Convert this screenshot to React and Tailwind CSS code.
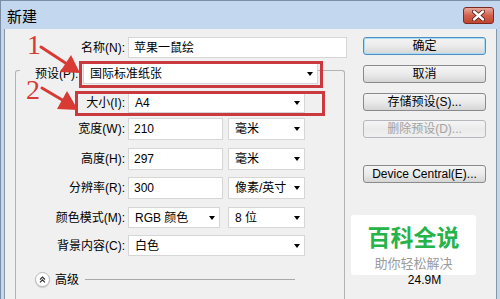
import React from "react";

const Field = ({ value, className = "" }) => (
  <div className={`flex items-center h-full bg-white border border-[#d6d6d6] pl-[5px] ${className}`}>
    <span className="whitespace-nowrap">{value}</span>
  </div>
);

const Select = ({ value, className = "" }) => (
  <div className={`flex items-center h-full bg-white border border-[#d6d6d6] pl-[6px] ${className}`}>
    <span className="whitespace-nowrap">{value}</span>
    <span className="ml-auto mr-[4px] w-0 h-0 border-l-[3.5px] border-r-[3.5px] border-t-[4px] border-l-transparent border-r-transparent border-t-black" />
  </div>
);

const Row = ({ label, className = "", children }) => (
  <div className={`flex items-center ${className}`}>
    <div className="w-[109px] text-right whitespace-nowrap">{label}</div>
    <div className="ml-[3px] flex h-full">{children}</div>
  </div>
);

const Button = ({ children, className = "", variant }) => {
  const look =
    variant === "default"
      ? "border-[#4f8fc0] shadow-[inset_0_0_0_1px_#a8dcf6] text-black"
      : variant === "disabled"
        ? "border-[#b4b8bc] text-[#a3a3a3] from-[#f5f5f5] to-[#f0f0f0]"
        : "border-[#8a8a8a] text-black";
  return (
    <div
      className={`h-[18px] flex items-center justify-center rounded-[3px] border bg-linear-to-b from-[#f4f4f4] via-[#ebebeb] to-[#d5d5d5] ${look} ${className}`}
    >
      {children}
    </div>
  );
};

export default function App() {
  return (
    <div className="relative w-[500px] h-[299px] overflow-hidden flex flex-col bg-[#c3d7ee] border-t border-l border-[#7b8ea6] text-[12px] leading-none text-black font-['Liberation_Sans','Noto_Sans_CJK_SC',sans-serif]">
      {/* title bar */}
      <div className="h-[28px] shrink-0 flex items-center justify-between pl-[6px] pr-[6px]">
        <span className="text-[15px] font-['Noto_Sans_CJK_SC',sans-serif]">新建</span>
        <div className="mt-[1px] w-[31px] h-[17px] rounded-[3px] border border-[#7a2a1f] bg-linear-to-b from-[#e9a79c] via-[#d2604c] to-[#c24430] flex items-center justify-center">
          <svg width="13" height="11" viewBox="0 0 13 11">
            <path d="M2 1.5 L11 9.5 M11 1.5 L2 9.5" stroke="#4a1a12" strokeWidth="4" strokeLinecap="round" />
            <path d="M2 1.5 L11 9.5 M11 1.5 L2 9.5" stroke="#ffffff" strokeWidth="2.4" strokeLinecap="round" />
          </svg>
        </div>
      </div>

      {/* dialog body */}
      <div className="flex-1 flex ml-[3px] mr-[3px] bg-[#f0f0f0] border-l border-r border-[#8797aa]">
        {/* left column */}
        <div className="w-[342px] shrink-0 flex flex-col">
          <div className="mt-[8px] h-[21px] flex items-center">
            <div className="w-[120px] text-right whitespace-nowrap">名称(N):</div>
            <Field value="苹果一鼠绘" className="ml-[3px] w-[219px]" />
          </div>

          {/* group box */}
          <div className="mt-[12px] ml-[10px] w-[330px] flex-1 flex flex-col border-t border-l border-r border-[#b3b3b3] rounded-t-[3px]">
            <div className="-mt-[8px] ml-[4px] pl-[15px] h-[21px] w-fit flex items-center bg-[#f0f0f0]">
              <div className="w-[45px] whitespace-nowrap">预设(P):</div>
              <Select value="国际标准纸张" className="ml-[3px] w-[235px]" />
            </div>

            <Row label="大小(I):" className="mt-[9px] h-[20px]">
              <Select value="A4" className="w-[177px]" />
            </Row>
            <Row label="宽度(W):" className="mt-[5px] h-[22px]">
              <Field value="210" className="w-[95px]" />
              <Select value="毫米" className="ml-[5px] w-[77px]" />
            </Row>
            <Row label="高度(H):" className="mt-[8px] h-[22px]">
              <Field value="297" className="w-[95px]" />
              <Select value="毫米" className="ml-[5px] w-[77px]" />
            </Row>
            <Row label="分辨率(R):" className="mt-[7px] h-[22px]">
              <Field value="300" className="w-[95px]" />
              <Select value="像素/英寸" className="ml-[5px] w-[77px]" />
            </Row>
            <Row label="颜色模式(M):" className="mt-[8px] h-[21px]">
              <Select value="RGB 颜色" className="w-[92px]" />
              <Select value="8 位" className="ml-[8px] w-[77px]" />
            </Row>
            <Row label="背景内容(C):" className="mt-[7px] h-[21px]">
              <Select value="白色" className="w-[177px]" />
            </Row>

            <div className="mt-[16px] ml-[19px] h-[15px] flex items-center">
              <div className="w-[15px] h-[15px] rounded-full bg-white border border-[#b9b9b9] shadow-[0_1px_1px_rgba(0,0,0,0.15)] flex items-center justify-center">
                <svg width="7" height="7" viewBox="0 0 7 7">
                  <path d="M1 3.5 L3.5 1 L6 3.5 M1 6.3 L3.5 3.8 L6 6.3" stroke="#333" strokeWidth="1.2" fill="none" />
                </svg>
              </div>
              <span className="ml-[5px]">高级</span>
              <div className="ml-[6px] w-[210px] h-px bg-[#a9a9a9]" />
            </div>
          </div>
        </div>

        {/* right column */}
        <div className="ml-[16px] w-[123px] flex flex-col">
          <Button variant="default" className="mt-[8px]">确定</Button>
          <Button className="mt-[10px]">取消</Button>
          <Button className="mt-[10px]">存储预设(S)...</Button>
          <Button variant="disabled" className="mt-[9px]">删除预设(D)...</Button>
          <Button className="mt-[27px]">Device Central(E)...</Button>
          <div className="mt-[90px] h-[14px] leading-[14px] text-center">24.9M</div>
        </div>
      </div>

      {/* watermark */}
      <div className="absolute left-[350px] top-[214px] w-[125px] h-[60px] bg-white rounded-[3px] flex flex-col items-center font-['Noto_Sans_CJK_SC',sans-serif]">
        <span className="mt-[9px] text-[23px] leading-[24px] font-bold text-[#26b34a]">百科全说</span>
        <span className="mt-[8px] text-[13px] leading-[14px] text-[#9b9b9b]">助你轻松解决</span>
      </div>

      {/* annotations */}
      <div className="absolute left-[78px] top-[60px] w-[244px] h-[27px] border-[3px] border-[#c9393e]" />
      <div className="absolute left-[74px] top-[90px] w-[250px] h-[25px] border-[3px] border-[#c9393e]" />
      <span className="absolute left-[26px] top-[30px] text-[28px] leading-[28px] text-[#d83a34] font-['Liberation_Serif',serif]">1</span>
      <span className="absolute left-[25px] top-[75px] text-[28px] leading-[28px] text-[#d83a34] font-['Liberation_Serif',serif]">2</span>
      <svg className="absolute left-0 top-0 pointer-events-none" width="500" height="299" viewBox="0 0 500 299">
        <path d="M40 46 L66 63" stroke="#d83a34" strokeWidth="3" strokeLinecap="round" />
        <polygon points="79,72 59,71 70,54" fill="#d83a34" />
        <path d="M41 87 L63 100" stroke="#d83a34" strokeWidth="3" strokeLinecap="round" />
        <polygon points="77,109 56,108 66,90" fill="#d83a34" />
      </svg>
    </div>
  );
}
